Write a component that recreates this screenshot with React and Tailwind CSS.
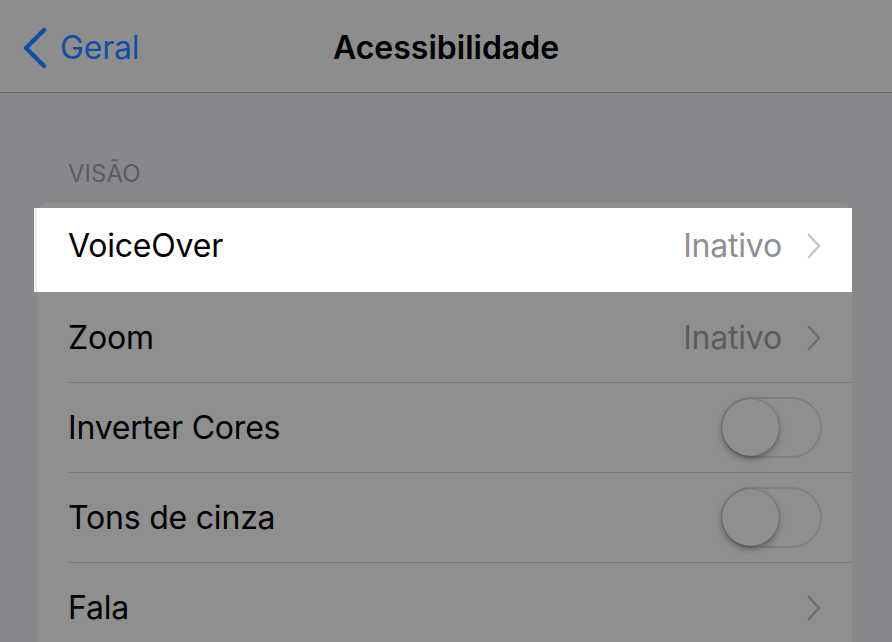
import React from "react";

function Chevron({ color }) {
  return (
    <svg width="16" height="26" viewBox="0 0 16 26" fill="none">
      <path d="M3 2 L13 13 L3 24" stroke={color} strokeWidth="2.6" strokeLinecap="round" strokeLinejoin="round" />
    </svg>
  );
}

function Toggle() {
  return (
    <div className="relative w-[101px] h-[61px] rounded-full border-[2px] border-[#808080] bg-[#8f8f8f]">
      <div className="absolute left-[-1px] top-[0px] w-[57px] h-[57px] rounded-full bg-[#8f8f8f] shadow-[0_3px_6px_rgba(0,0,0,0.35),0_0_1px_rgba(0,0,0,0.4)]" />
    </div>
  );
}

function Row({ label, value, chevron, toggle, last }) {
  return (
    <div className="flex h-[90px] pl-[31px]">
      <div className={`flex flex-1 items-center pr-[30px] ${last ? "" : "border-b border-[#7a7a7a]"}`}>
        <span className="flex-1 text-[32px] text-black tracking-[-0.2px]">{label}</span>
        {value && <span className="text-[32px] text-[#5c5c5c] mr-[24px] tracking-[-0.2px]">{value}</span>}
        {chevron && <Chevron color="#6e6e6e" />}
        {toggle && <Toggle />}
      </div>
    </div>
  );
}

export default function App() {
  return (
    <div
      className="w-[892px] h-[642px] overflow-hidden bg-[#88878c] flex flex-col"
      style={{ fontFamily: "Inter, 'Noto Sans', sans-serif" }}
    >
      <div className="relative h-[93px] shrink-0 bg-[#8d8d8e] border-b border-[#6b6b6b] flex items-center pt-[3px]">
        <div className="flex items-center pl-[22px] gap-[12px]">
          <svg width="26" height="42" viewBox="0 0 26 42" fill="none">
            <path d="M22 3 L4 21 L22 39" stroke="#0f4fa6" strokeWidth="4.5" strokeLinecap="round" strokeLinejoin="round" />
          </svg>
          <span className="text-[32px] text-[#0f4fa6] tracking-[-0.2px]">Geral</span>
        </div>
        <div className="absolute inset-0 pt-[3px] flex items-center justify-center">
          <span className="text-[32px] font-semibold text-black tracking-[0px]">Acessibilidade</span>
        </div>
      </div>

      <div className="h-[110px] shrink-0 flex items-end pl-[68px] pb-[17px]">
        <span className="text-[24px] text-[#5c5c60] leading-none">VISÃO</span>
      </div>

      <div className="ml-[37px] w-[815px] bg-[#8f8f8f] rounded-t-[10px] pt-[5px]">
        <div className="-ml-[3px] h-[84px] bg-white flex items-center pl-[31px] pr-[30px] pb-[8px] border-l-[3px] border-[#eef0f6]">
          <span className="flex-1 text-[32px] text-black tracking-[-0.2px]">VoiceOver</span>
          <span className="text-[32px] text-[#8e8e93] mr-[24px] tracking-[-0.2px]">Inativo</span>
          <Chevron color="#c7c7cc" />
        </div>
        <div className="h-[1px]" />
        <Row label="Zoom" value="Inativo" chevron />
        <Row label="Inverter Cores" toggle />
        <Row label="Tons de cinza" toggle />
        <Row label="Fala" chevron last />
      </div>
    </div>
  );
}
